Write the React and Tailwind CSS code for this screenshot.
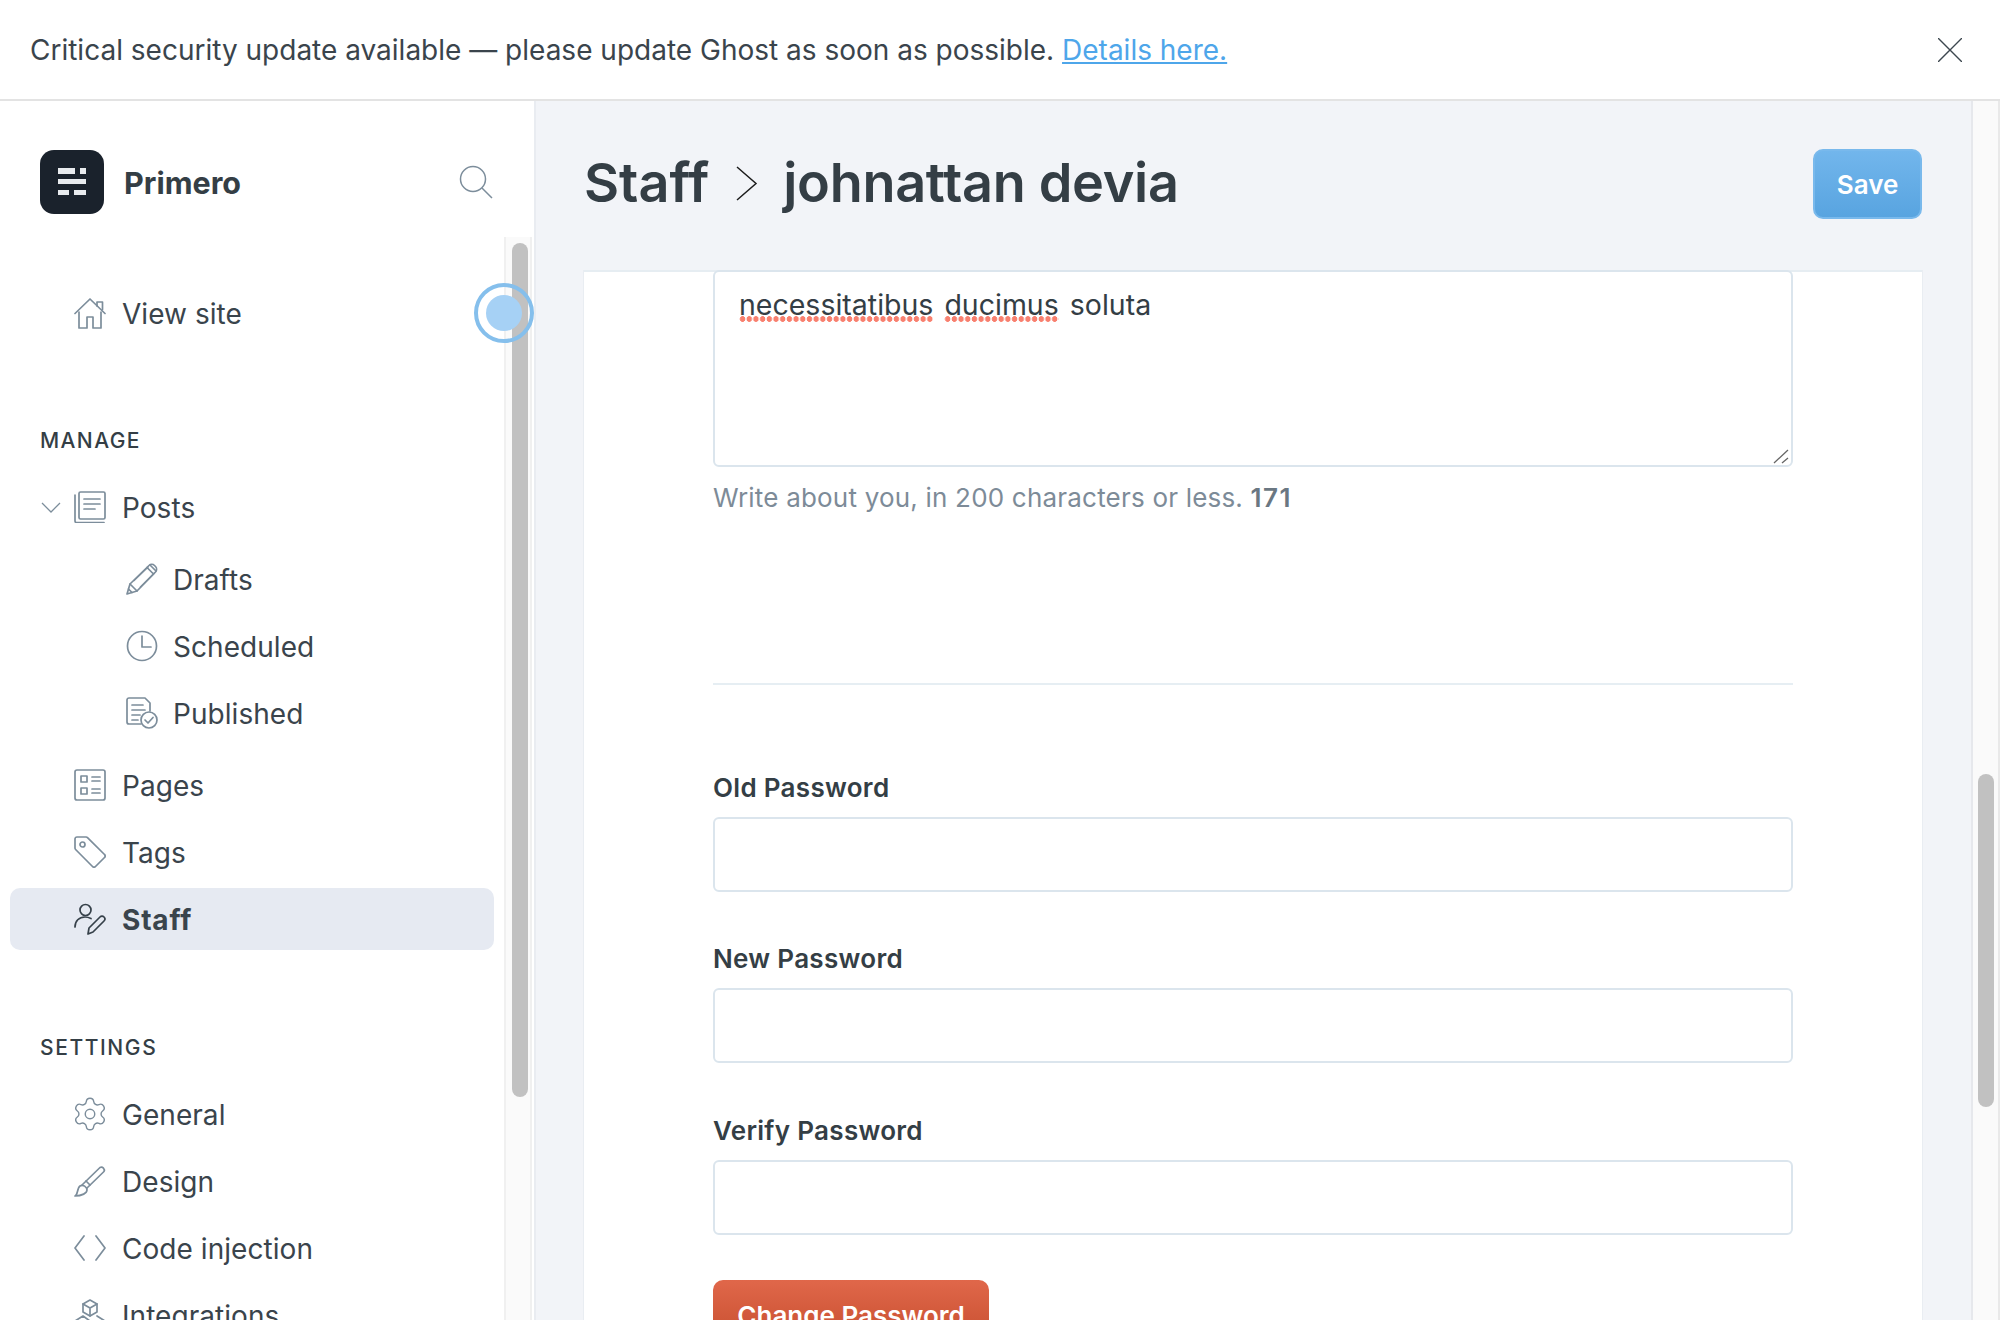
import React from "react";
import { Settings } from "lucide-react";

const stroke = "#7c8d9b";

const Svg = ({ children, color = stroke }) => (
  <svg width="32" height="32" viewBox="0 0 32 32" fill="none" stroke={color} strokeWidth="1.700" strokeLinecap="round" strokeLinejoin="round" className="shrink-0">
    {children}
  </svg>
);

const HomeIcon = () => (
  <Svg>
    <path d="M1 16.500 16 2l15 14.500" />
    <path d="M23 9V5h5.500v7.500" />
    <path d="M5 15v16h8v-11h6v11h8V15" />
  </Svg>
);
const PostsIcon = () => (
  <Svg>
    <rect x="5" y="1" width="26" height="27" rx="1.500" />
    <path d="M1 4v26a1.500 1.500 0 0 0 1.500 1.500H30" />
    <path d="M10 8h16M10 13h16M10 18h11" />
  </Svg>
);
const PencilIcon = () => (
  <Svg>
    <path d="M1 31l3-10L23 2.500a4 4 0 0 1 5.500 0l1 1a4 4 0 0 1 0 5.500L11 28z" />
    <path d="M4 21l7 7M21 4.500l6.500 6.500M24 2l6 6M8 17.500 22 4M14.500 24 28 10.500M2.500 26l3.500 3.500" />
  </Svg>
);
const ClockIcon = () => (
  <Svg>
    <circle cx="16" cy="16" r="14.500" />
    <path d="M16 6v11h9" />
  </Svg>
);
const PublishedIcon = () => (
  <Svg>
    <path d="M15 27H3a2 2 0 0 1-2-2V3a2 2 0 0 1 2-2h16l5 5v8" />
    <path d="M6 8h11M6 13h13M6 18h8M6 23h6" />
    <circle cx="23" cy="23" r="8" />
    <path d="M19 23l3 3 5-5.500" />
  </Svg>
);
const PagesIcon = () => (
  <Svg>
    <rect x="1" y="1" width="30" height="30" rx="2" />
    <rect x="7" y="7" width="6" height="6" />
    <rect x="7" y="19" width="6" height="6" />
    <path d="M18 8h8M18 12h8M18 20h8M18 24h8" />
  </Svg>
);
const TagIcon = () => (
  <Svg>
    <path d="M1 3a2 2 0 0 1 2-2h9a2 2 0 0 1 1.500.6L30.500 18.500a2 2 0 0 1 0 3l-9 9a2 2 0 0 1-3 0L1.600 13.500A2 2 0 0 1 1 12z" />
    <circle cx="8.500" cy="8.500" r="2.500" />
  </Svg>
);
const StaffIcon = () => (
  <Svg color="#36414a">
    <circle cx="11.500" cy="7" r="5.500" />
    <path d="M1 24c0-6 4-10 10-10 2 0 4 .5 6 1.500" />
    <path d="M14 31l1-6 11-11a2.800 2.800 0 0 1 4 4L19 29z" />
  </Svg>
);
const BrushIcon = () => (
  <Svg>
    <path d="M1 31c3-1 2-8 5-10s7 1 7 4-5 6-12 6z" />
    <path d="M8 20 26 2.500a3 3 0 0 1 4 4L13 23" />
    <path d="M12 16l4 4" />
  </Svg>
);
const CodeIcon = () => (
  <Svg>
    <path d="M10 4 1 16l9 12M22 4l9 12-9 12" />
  </Svg>
);
const BoxesIcon = () => (
  <Svg>
    <path d="M16 1l7 4v8l-7 4-7-4V5z" />
    <path d="M9 5l7 4 7-4M16 9v8" />
    <path d="M9 17l-8 5v8l8 4 7-4v-8zM23 17l8 5v8l-8 4-7-4" />
  </Svg>
);

const NavItem = ({ icon, label, sub, active, caret }) => (
  <div className={`relative flex h-[62px] items-center gap-4 rounded-[10px] ${sub ? "pl-[116px]" : "pl-16"} ${active ? "bg-[#e6eaf2] font-bold" : ""}`}>
    {caret && (
      <svg width="20" height="12" viewBox="0 0 20 12" fill="none" stroke={stroke} strokeWidth="1.300" className="absolute left-[31px] top-[26px]">
        <path d="M1 1l9 9 9-9" />
      </svg>
    )}
    {icon}
    <span className={`pt-[2px] ${sub ? "-ml-[1px]" : ""} ${active ? "tracking-[0.8px]" : "tracking-[0.05px]"}`}>{label}</span>
  </div>
);

const Field = ({ label, className = "" }) => (
  <div className={`flex flex-col ${className}`}>
    <label className="flex h-[30px] items-center text-[26px] font-semibold tracking-[0.3px] text-[#343e45]">{label}</label>
    <div className="mt-[15px] h-[75px] rounded-[6px] border-2 border-[#dbe5ed] bg-white" />
  </div>
);

const misspelt = "bg-[radial-gradient(circle,#f8806f_2.600px,transparent_3px)] bg-[length:6.700px_6px] bg-bottom bg-repeat-x";

export default function App() {
  return (
    <div className="flex h-[1320px] w-[2000px] flex-col overflow-hidden bg-white font-['Inter',sans-serif] text-[28px] text-[#3a444c]">
      <div className="flex h-[101px] shrink-0 items-center justify-between border-b-2 border-[#e3e3e3] bg-white pl-[30px] pr-[38px]">
        <p>
          Critical security update available — please update Ghost as soon as possible. <a className="text-[#4ea6ea] underline">Details here.</a>
        </p>
        <svg width="24" height="24" viewBox="0 0 24 24" fill="none" stroke="#3d474f" strokeWidth="1.400">
          <path d="M0 0l24 24M24 0 0 24" />
        </svg>
      </div>

      <div className="flex min-h-0 flex-1">
        <aside className="relative flex w-[536px] shrink-0 flex-col border-r-2 border-[#e9ecf1] bg-white">
          <div className="flex h-[136px] shrink-0 items-start justify-between pl-10 pr-[41px] pt-[49px]">
            <div className="flex items-center gap-5">
              <div className="h-16 w-[64px] rounded-[14px] bg-[#1a222c]">
                <svg width="64" height="64" viewBox="0 0 64 64" fill="#e8ebee">
                  <rect x="18" y="18" width="17" height="6" />
                  <rect x="40" y="18" width="6" height="6" />
                  <rect x="18" y="29" width="28" height="5" />
                  <rect x="18" y="40" width="11" height="5" />
                  <rect x="34" y="40" width="12" height="5" />
                </svg>
              </div>
              <span className="pt-[2px] text-[30.500px] font-bold text-[#343e45]">Primero</span>
            </div>
            <svg width="34" height="34" viewBox="0 0 34 34" fill="none" stroke={stroke} strokeWidth="1.500" className="mt-[15px]">
              <circle cx="14" cy="14" r="12.500" />
              <path d="M23 23l10 10" />
            </svg>
          </div>

          <div className="flex min-h-0 flex-1">
            <nav className="flex-1 pl-[10px] pr-[10px] pt-[45px]">
              <NavItem icon={<HomeIcon />} label="View site" />

              <h4 className="mt-20 flex h-8 items-center pl-[30px] pt-[2px] text-[21px] font-medium tracking-[1.400px] text-[#343e45]">MANAGE</h4>
              <div className="mt-5 flex flex-col gap-[5px]">
                <NavItem caret icon={<PostsIcon />} label="Posts" />
                <div className="my-[5px] flex flex-col gap-[5px]">
                  <NavItem sub icon={<PencilIcon />} label="Drafts" />
                  <NavItem sub icon={<ClockIcon />} label="Scheduled" />
                  <NavItem sub icon={<PublishedIcon />} label="Published" />
                </div>
                <NavItem icon={<PagesIcon />} label="Pages" />
                <NavItem icon={<TagIcon />} label="Tags" />
                <NavItem active icon={<StaffIcon />} label="Staff" />
              </div>

              <h4 className="mt-[81px] flex h-8 items-center pl-[30px] pt-[2px] text-[21px] font-medium tracking-[1.600px] text-[#343e45]">SETTINGS</h4>
              <div className="mt-5 flex flex-col gap-[5px]">
                <NavItem icon={<Settings size={38} strokeWidth={0.9} color={stroke} className="-mx-[3px] shrink-0" />} label="General" />
                <NavItem icon={<BrushIcon />} label="Design" />
                <NavItem icon={<CodeIcon />} label="Code injection" />
                <NavItem icon={<BoxesIcon />} label="Integrations" />
              </div>
            </nav>
            <div className="mr-[2px] w-[28px] shrink-0 border-x-2 border-[#f0f0f0] bg-[#fafafa] pl-[6px] pt-[6px]">
              <div className="h-[854px] w-4 rounded-full bg-[#c1c1c1]" />
            </div>
          </div>

          {/* touch pointer marker over the scrollbar */}
          <div className="absolute left-[474px] top-[182px] flex h-[60px] w-[60px] items-center justify-center rounded-full border-4 border-[#85bfec]">
            <div className="h-9 w-9 rounded-full bg-[#a6d1f5]" />
          </div>
        </aside>

        <main className="flex min-w-0 flex-1 flex-col border-r-2 border-[#e6e8ec] bg-[#f2f4f8] pl-12 pr-[49px]">
          <header className="flex h-[169px] shrink-0 items-start justify-between pt-12">
            <div className="-mt-[2px] flex h-[70px] items-center text-[54px] font-semibold text-[#343e45]">
              <span>Staff</span>
              <svg width="22" height="35" viewBox="0 0 22 35" fill="none" stroke="#1c1c1c" strokeWidth="1.500" className="ml-[27px] mr-[25px] mt-[2px]">
                <path d="M1 1l19 16.500L1 34" />
              </svg>
              <span className="tracking-[-0.3px]">johnattan devia</span>
            </div>
            <button className="h-[70px] w-[109px] rounded-[10px] border-2 border-[#79b9ec] bg-linear-to-b from-[#72b6ec] to-[#58a4e0] text-[26px] font-semibold text-white">Save</button>
          </header>

          <section className="min-h-0 flex-1 border-t-2 border-[#e6edf2] bg-white px-[129px] shadow-[1px_0_0_#e9edf2,-1px_0_0_#e9edf2]">
            <div className="relative -mt-[2px] h-[197px] rounded-[6px] border-2 border-[#dbe5ed] px-[24px] pt-[13px] text-[28.500px] leading-10 text-[#343e45] [word-spacing:3px]">
              <span className={misspelt}>necessitatibus</span> <span className={misspelt}>ducimus</span> soluta
              <svg width="16" height="15" viewBox="0 0 16 15" fill="none" stroke="#666" strokeWidth="1.300" className="absolute bottom-[1px] right-[2px]">
                <path d="M1 14 15 1M9 14l6-5" />
              </svg>
            </div>
            <p className="mt-[17px] text-[26px] leading-7 tracking-[0.2px] text-[#7d8b98]">
              Write about you, in 200 characters or less. <b className="font-semibold tracking-[1.500px] text-[#6a7782]">171</b>
            </p>
            <hr className="mt-[171px] border-t-2 border-[#e6eef3]" />
            <div className="mt-[87px] flex flex-col gap-[51px]">
              <Field label="Old Password" />
              <Field label="New Password" />
              <Field label="Verify Password" className="mt-px" />
            </div>
            <button className="mt-[45px] h-[70px] w-[276px] rounded-[10px] bg-linear-to-b from-[#e0674a] to-[#c44c2b] text-[26px] font-semibold text-white">Change Password</button>
          </section>
        </main>

        <div className="w-[27px] shrink-0 border-r-2 border-[#e9e9e9] bg-[#fafafa] pl-[5px] pt-[673px]">
          <div className="h-[333px] w-4 rounded-full bg-[#c1c1c1]" />
        </div>
      </div>
    </div>
  );
}
